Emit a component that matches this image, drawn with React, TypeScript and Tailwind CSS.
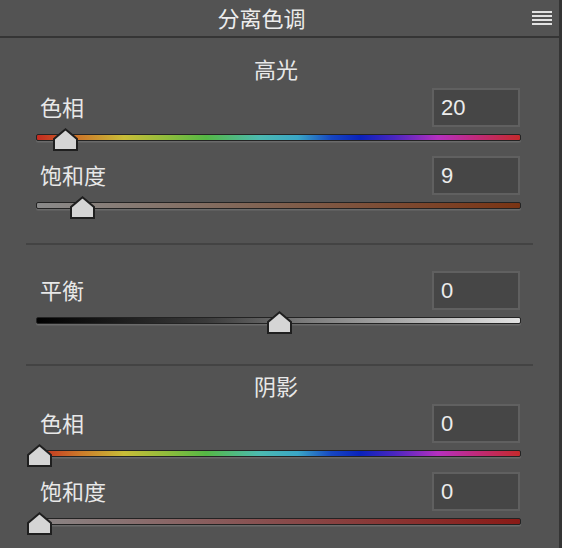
import React from "react";

const CJK = "font-['Noto_Sans_CJK_SC','Noto_Sans',sans-serif]";
const NUM = "font-['Liberation_Sans','Noto_Sans',sans-serif]";

const HUE =
  "bg-[linear-gradient(to_right,#c42a20,#cc7a2a_9%,#c9bd38_18%,#8fbd3c_27%,#55b845_35%,#4cbab0_46%,#3aa6c6_54%,#1646c2_61%,#0a22bc_67%,#4a26c0_74%,#b530bf_83%,#c02a7a_91%,#c42a2c)]";

interface Row {
  label: string;
  value: number;
  min: number;
  max: number;
  track: string;
}

function Thumb({ frac }: { frac: number }) {
  // track spans 485px; thumb centre travels from 2px to 483px
  const left = 2 + frac * 481 - 12.5;
  return (
    <svg
      width="25"
      height="23"
      viewBox="0 0 25 23"
      className="absolute top-[-7px]"
      style={{ left }}
    >
      <path d="M1 22 L1 11 L12.5 1.3 L24 11 L24 22 Z" fill="#d5d5d5" stroke="#1f1f1f" strokeWidth="2" strokeLinejoin="miter" />
    </svg>
  );
}

function SliderRow({ row }: { row: Row }) {
  const frac = (row.value - row.min) / (row.max - row.min);
  return (
    <div className="h-[68px]">
      <div className="flex h-[39px] items-center justify-between pl-[4px] pr-[1px]">
        <span className={`${CJK} mb-[3px] text-[22px] leading-none text-[#e8e8e8]`}>{row.label}</span>
        <div className="flex h-[39px] w-[88px] items-center border-2 border-[#606060] bg-[#464646] pl-[7px]">
          <span className={`${NUM} text-[22px] leading-none text-[#ececec]`}>{row.value}</span>
        </div>
      </div>
      <div className="pt-[7px]">
        <div
          className={`relative h-[7px] w-[485px] rounded-[2px] border border-[#232323] shadow-[0_1px_0_#6a6a6a,0_2px_0_#5e5e5e] ${row.track}`}
        >
          <Thumb frac={frac} />
        </div>
      </div>
    </div>
  );
}

function Heading({ text, className }: { text: string; className: string }) {
  return (
    <div className={`${CJK} h-[22px] pr-[5px] text-center text-[22px] leading-[22px] text-[#e8e8e8] ${className}`}>
      {text}
    </div>
  );
}

export default function App() {
  return (
    <div className="flex h-[548px] w-[562px] overflow-hidden bg-[#535353]">
      <div className="flex w-[559px] flex-col">
        <div className="flex h-[36px] shrink-0 items-center">
          <div className={`${CJK} mb-[2px] flex-1 text-center text-[22px] leading-none text-[#ececec]`}>分离色调</div>
          <div className="flex w-[36px] flex-col gap-[2px] pl-[9px]">
            <div className="h-[2px] w-[20px] bg-[#e2e2e2]" />
            <div className="h-[2px] w-[20px] bg-[#e2e2e2]" />
            <div className="h-[2px] w-[20px] bg-[#e2e2e2]" />
            <div className="h-[2px] w-[20px] bg-[#e2e2e2]" />
          </div>
        </div>
        <div className="h-[2px] shrink-0 bg-[#353535]" />

        <div className="flex flex-col pl-[36px] pr-[38px]">
          <Heading text="高光" className="mt-[19px] mb-[9px]" />
          <SliderRow row={{ label: "色相", value: 20, min: 0, max: 360, track: HUE }} />
          <SliderRow
            row={{
              label: "饱和度",
              value: 9,
              min: 0,
              max: 100,
              track: "bg-[linear-gradient(to_right,#8a8a8a,#80604e_50%,#7a3414)]",
            }}
          />
        </div>

        <div className="mx-[26px] mt-[19px] h-[2px] shrink-0 bg-[#434343]" />

        <div className="flex flex-col pl-[36px] pr-[38px] pt-[26px]">
          <SliderRow
            row={{
              label: "平衡",
              value: 0,
              min: -100,
              max: 100,
              track: "bg-[linear-gradient(to_right,#000000,#3a3a3a_35%,#7a7a7a_55%,#e2e2e2)]",
            }}
          />
        </div>

        <div className="mx-[26px] mt-[25px] h-[2px] shrink-0 bg-[#434343]" />

        <div className="flex flex-col pl-[36px] pr-[38px]">
          <Heading text="阴影" className="mt-[8px] mb-[8px]" />
          <SliderRow row={{ label: "色相", value: 0, min: 0, max: 360, track: HUE }} />
          <SliderRow
            row={{
              label: "饱和度",
              value: 0,
              min: 0,
              max: 100,
              track: "bg-[linear-gradient(to_right,#8a8686,#884c4c_50%,#8a1a16)]",
            }}
          />
        </div>
      </div>
      <div className="w-[3px] bg-[#343434]" />
    </div>
  );
}
